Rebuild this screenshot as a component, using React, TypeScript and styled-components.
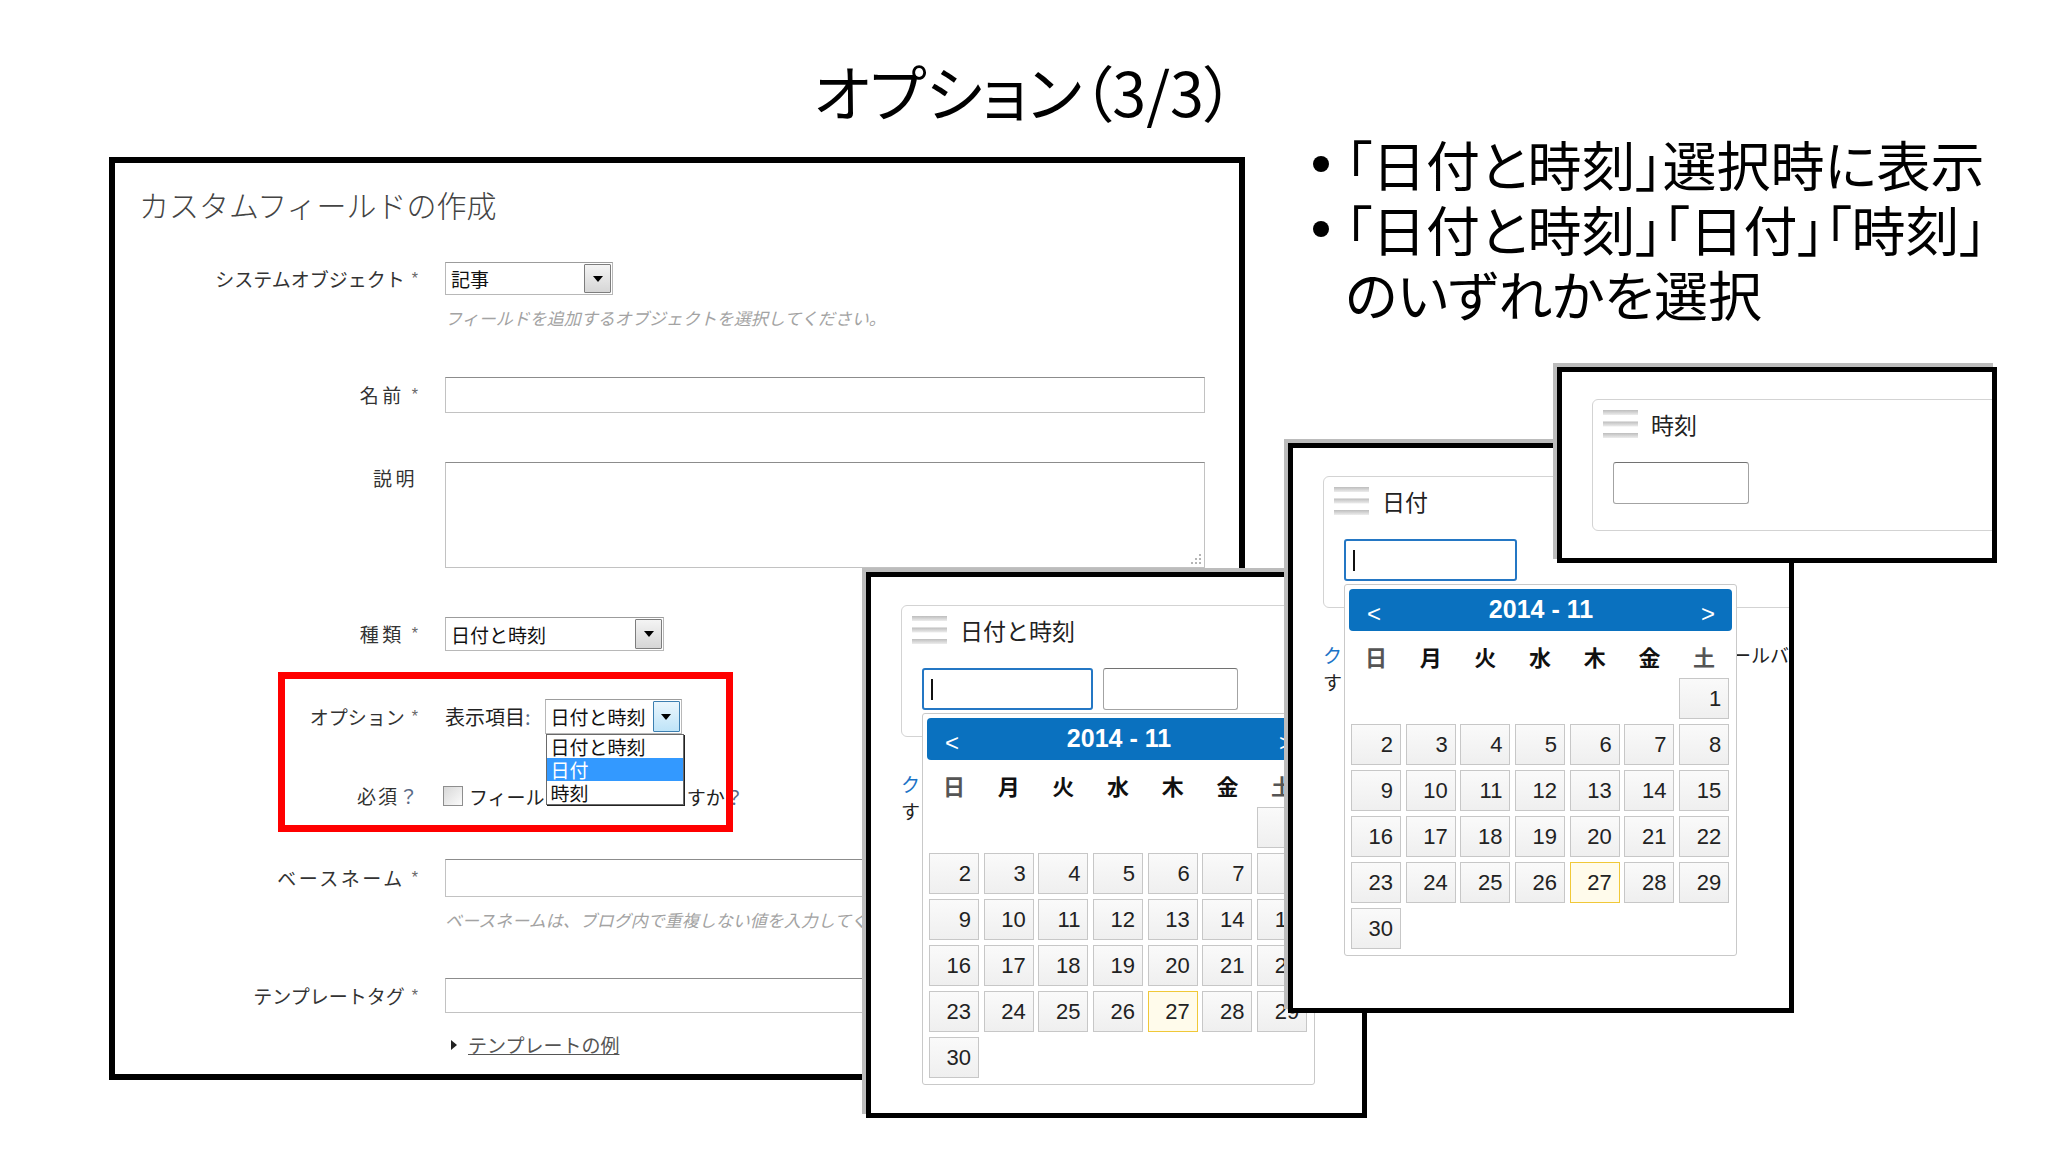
import React from 'react';
import styled, { createGlobalStyle } from 'styled-components';

const JP = `"Noto Sans CJK JP", "Noto Sans", sans-serif`;
const ARIAL = `"Liberation Sans", Arial, sans-serif`;

const GlobalStyle = createGlobalStyle`
  html, body {
    margin: 0;
    padding: 0;
    background: #fff;
  }
  body {
    width: 2048px;
    height: 1154px;
    overflow: hidden;
    font-family: ${JP};
    color: #000;
  }
  * {
    box-sizing: border-box;
  }
`;

const Slide = styled.div`
  position: relative;
  width: 2048px;
  height: 1154px;
  background: #fff;
`;

const Title = styled.h1`
  margin: 0;
  padding-top: 52px;
  text-align: center;
  font-size: 61px;
  font-weight: 400;
  line-height: 78px;
  font-feature-settings: 'palt';
`;

const Notes = styled.ul`
  position: absolute;
  left: 1305px;
  top: 131px;
  margin: 0;
  padding: 0;
  list-style: none;
  font-size: 54px;
  line-height: 65px;
  font-feature-settings: 'palt';
  white-space: nowrap;
`;

const Note = styled.li`
  display: flex;
  align-items: flex-start;
`;

const Dot = styled.span`
  flex: none;
  width: 16px;
  height: 16px;
  margin: 25px 16px 0 8px;
  border-radius: 50%;
  background: #000;
`;

/* a screenshot pasted on the slide */
const Shot = styled.div<{ $x: number; $y: number; $w: number; $h: number; $b?: number; $ghost?: boolean }>`
  position: absolute;
  isolation: isolate;
  left: ${p => p.$x}px;
  top: ${p => p.$y}px;
  width: ${p => p.$w}px;
  height: ${p => p.$h}px;
  border: ${p => p.$b ?? 5}px solid #000;
  background: #fff;
  overflow: hidden;
  box-shadow: ${p => (p.$ghost ? '-4px -4px 0 #bcbcbc' : 'none')};
`;

/* ---------- main form ---------- */

const Heading = styled.h2`
  margin: 0;
  padding: 21px 0 0 24px;
  font-size: 30px;
  line-height: 40px;
  font-weight: 300;
  color: #444;
  white-space: nowrap;
`;

const FormRow = styled.div<{ $mt: number }>`
  display: grid;
  grid-template-columns: 303px 760px;
  column-gap: 27px;
  align-items: start;
  margin-top: ${p => p.$mt}px;
`;

const Label = styled.div<{ $lh: number; $ls?: number }>`
  text-align: right;
  font-size: 19px;
  line-height: ${p => p.$lh}px;
  letter-spacing: ${p => p.$ls ?? 0}px;
  color: #333;
  white-space: nowrap;
`;

const Req = styled.span`
  margin-left: 7px;
  font-family: ${ARIAL};
  font-size: 16px;
  letter-spacing: 0;
  color: #666;
  vertical-align: 3px;
`;

const Quest = styled.span`
  color: #5a6a86;
  letter-spacing: 0;
`;

const TextField = styled.div<{ $h: number }>`
  position: relative;
  width: 760px;
  height: ${p => p.$h}px;
  border: 1px solid #c2c2c2;
  border-top-color: #8c8c8c;
  background: #fff;
`;

const Grip = styled.svg`
  position: absolute;
  right: 2px;
  bottom: 2px;
`;

const Help = styled.div<{ $mt: number }>`
  margin-top: ${p => p.$mt}px;
  font-size: 17px;
  line-height: 22px;
  font-style: italic;
  color: #a3a3a3;
  white-space: nowrap;
`;

const SelectBox = styled.div<{ $w: number; $h: number }>`
  position: relative;
  display: flex;
  align-items: stretch;
  width: ${p => p.$w}px;
  height: ${p => p.$h}px;
  border: 1px solid #b8b8b8;
  border-top-color: #9c9c9c;
  background: #fff;
  font-size: 19px;
  color: #111;
`;

const SelectText = styled.span`
  flex: 1;
  padding-left: 5px;
  display: flex;
  align-items: center;
  white-space: nowrap;
`;

const SelectButton = styled.span<{ $hot?: boolean }>`
  flex: none;
  width: 27px;
  margin: 1px;
  display: flex;
  align-items: center;
  justify-content: center;
  border: 1px solid ${p => (p.$hot ? '#3c7fb1' : '#7d7d7d')};
  border-radius: 1px;
  background: ${p =>
    p.$hot ? 'linear-gradient(#eaf6fd, #bfe4f8)' : 'linear-gradient(#f4f4f4, #d6d6d6)'};
  &::after {
    content: '';
    border-left: 5px solid transparent;
    border-right: 5px solid transparent;
    border-top: 6px solid #000;
  }
`;

const OptionList = styled.ul`
  position: absolute;
  left: 0;
  top: calc(100% + 1px);
  z-index: 1;
  width: 138px;
  margin: 0;
  padding: 0;
  list-style: none;
  background: #fff;
  border: 1px solid #6a6a6a;
  box-shadow: 1px 1px 0 #222;
  font-size: 19px;
  line-height: 23px;
`;

const OptionItem = styled.li<{ $selected?: boolean }>`
  padding-left: 4px;
  color: ${p => (p.$selected ? '#fff' : '#111')};
  background: ${p => (p.$selected ? '#3399ff' : 'transparent')};
`;

const Inline = styled.div<{ $h: number }>`
  display: flex;
  align-items: center;
  height: ${p => p.$h}px;
  font-size: 19px;
  color: #222;
  white-space: nowrap;
`;

const InlineLabel = styled.span`
  margin-right: 14px;
  font-size: 20px;
`;

const Check = styled.span`
  flex: none;
  width: 20px;
  height: 20px;
  margin: 0 6px 0 -2px;
  border: 1px solid #8e8e8e;
  background: linear-gradient(135deg, #d8d8d8, #fbfbfb);
`;

/* room for the part of the sentence hidden by the open list */
const Hidden = styled.span<{ $w: number }>`
  flex: none;
  width: ${p => p.$w}px;
`;

const TemplateLink = styled.div`
  display: flex;
  align-items: center;
  gap: 11px;
  margin-left: 6px;
  font-size: 19px;
  line-height: 22px;
  color: #555;
  white-space: nowrap;
  span {
    text-decoration: underline;
  }
`;

const Triangle = styled.i`
  width: 0;
  height: 0;
  border-left: 6px solid #222;
  border-top: 5px solid transparent;
  border-bottom: 5px solid transparent;
`;

const Annotation = styled.div`
  position: absolute;
  left: 163px;
  top: 509px;
  z-index: 2;
  width: 455px;
  height: 160px;
  border: 7px solid #ff0000;
  pointer-events: none;
`;

/* ---------- date / time pickers ---------- */

const Group = styled.div<{ $mt: number }>`
  width: 500px;
  height: 132px;
  margin: ${p => p.$mt}px 0 0 30px;
  border: 1px solid #d3d3d3;
  border-radius: 6px;
`;

const GroupHead = styled.div`
  display: flex;
  align-items: center;
  gap: 13px;
  height: 38px;
  padding: 10px 0 0 10px;
`;

const GroupLabel = styled.span`
  font-size: 23px;
  line-height: 28px;
  color: #222;
`;

const InputRow = styled.div`
  display: flex;
  gap: 10px;
  margin: 24px 0 0 20px;
`;

const InputWrap = styled.div`
  position: relative;
`;

const TextBox = styled.div<{ $w: number; $focus?: boolean }>`
  display: flex;
  align-items: center;
  width: ${p => p.$w}px;
  height: 42px;
  padding-left: 7px;
  border-radius: 3px;
  background: #fff;
  border: ${p => (p.$focus ? '2px solid #2477c4' : '1px solid #a3a3a3')};
  border-top-color: ${p => (p.$focus ? '#2477c4' : '#727272')};
`;

const Caret = styled.i`
  width: 2px;
  height: 21px;
  background: #111;
`;

const Behind = styled.div`
  margin: 33px 0 0 30px;
  font-size: 19px;
  line-height: 27px;
  color: #222;
  white-space: nowrap;
`;

const BehindLine = styled.div`
  display: flex;
  justify-content: space-between;
`;

const BlueLink = styled.span`
  color: #1a72c6;
`;

const CalendarPop = styled.div`
  position: absolute;
  left: 0;
  top: calc(100% + 3px);
  z-index: 3;
  width: 393px;
  height: 372px;
  padding: 4px 4px 6px;
  border: 1px solid #c9c9c9;
  border-radius: 3px;
  background: #fff;
`;

const CalHead = styled.div`
  display: flex;
  align-items: center;
  justify-content: space-between;
  height: 42px;
  padding: 3px 17px 0 18px;
  border-radius: 4px;
  background: #0a71bf;
  color: #fff;
  font-family: ${ARIAL};
`;

const Nav = styled.span`
  font-size: 24px;
  padding-top: 4px;
`;

const CalTitle = styled.span`
  font-size: 25px;
  font-weight: 700;
  margin-top: -4px;
`;

const Weekdays = styled.div`
  display: grid;
  grid-template-columns: repeat(7, 50px);
  column-gap: 4.7px;
  height: 47px;
  margin-left: 2px;
  padding-top: 10px;
  line-height: 30px;
  font-size: 22px;
  font-weight: 700;
  text-align: center;
`;

const Weekday = styled.span<{ $muted?: boolean }>`
  color: ${p => (p.$muted ? '#555' : '#111')};
`;

const DayGrid = styled.div`
  display: grid;
  grid-template-columns: repeat(7, 50px);
  grid-auto-rows: 41px;
  gap: 5px 4.7px;
  margin-left: 2px;
`;

const Day = styled.span<{ $today?: boolean; $start?: number }>`
  grid-column-start: ${p => p.$start ?? 'auto'};
  padding: 1px 7px 0 0;
  border: 1px solid ${p => (p.$today ? '#f0c838' : '#c7c7c7')};
  background: ${p => (p.$today ? '#fffbeb' : 'linear-gradient(#fafafa, #efefef)')};
  text-align: right;
  font-family: ${ARIAL};
  font-size: 22px;
  line-height: 38px;
  color: #222;
`;

const weekdays = ['日', '月', '火', '水', '木', '金', '土'];
const days = Array.from({ length: 30 }, (_, i) => i + 1);

const LinesIcon = () => (
  <svg width="35" height="28" viewBox="0 0 35 28">
    <defs>
      <linearGradient id="bar" x1="0" y1="0" x2="0" y2="1">
        <stop offset="0" stopColor="#bdbdbd" />
        <stop offset="1" stopColor="#ededed" />
      </linearGradient>
    </defs>
    <rect x="0" y="0" width="35" height="5" fill="url(#bar)" />
    <rect x="0" y="11.5" width="35" height="5" fill="url(#bar)" />
    <rect x="0" y="23" width="35" height="5" fill="url(#bar)" />
  </svg>
);

const Calendar = () => (
  <CalendarPop>
    <CalHead>
      <Nav>&lt;</Nav>
      <CalTitle>2014 - 11</CalTitle>
      <Nav>&gt;</Nav>
    </CalHead>
    <Weekdays>
      {weekdays.map((d, i) => (
        <Weekday key={d} $muted={i === 0 || i === 6}>
          {d}
        </Weekday>
      ))}
    </Weekdays>
    <DayGrid>
      {days.map(d => (
        <Day key={d} $today={d === 27} $start={d === 1 ? 7 : undefined}>
          {d}
        </Day>
      ))}
    </DayGrid>
  </CalendarPop>
);

type FieldSpec = { w: number; focus?: boolean };

const PickerShot = ({
  x,
  y,
  w,
  h,
  mt,
  label,
  fields,
  calendar,
  tail,
}: {
  x: number;
  y: number;
  w: number;
  h: number;
  mt: number;
  label: string;
  fields: FieldSpec[];
  calendar?: boolean;
  tail?: boolean;
}) => (
  <Shot $x={x} $y={y} $w={w} $h={h} $ghost>
    <Group $mt={mt}>
      <GroupHead>
        <LinesIcon />
        <GroupLabel>{label}</GroupLabel>
      </GroupHead>
      <InputRow>
        {fields.map((f, i) => (
          <InputWrap key={i}>
            <TextBox $w={f.w} $focus={f.focus}>
              {f.focus && <Caret />}
            </TextBox>
            {calendar && i === 0 && <Calendar />}
          </InputWrap>
        ))}
      </InputRow>
    </Group>
    {calendar && (
      <Behind>
        <BehindLine>
          <BlueLink>ク</BlueLink>
          {tail && <span>ールバ</span>}
        </BehindLine>
        <div>す</div>
      </Behind>
    )}
  </Shot>
);

const Select = ({ w, h, text, hot }: { w: number; h: number; text: string; hot?: boolean }) => (
  <SelectBox $w={w} $h={h}>
    <SelectText>{text}</SelectText>
    <SelectButton $hot={hot} />
  </SelectBox>
);

const App = () => (
  <>
    <GlobalStyle />
    <Slide>
      <Title>オプション（3/3）</Title>
      <Notes>
        <Note>
          <Dot />
          <span>「日付と時刻」選択時に表示</span>
        </Note>
        <Note>
          <Dot />
          <span>
            「日付と時刻」「日付」「時刻」
            <br />
            のいずれかを選択
          </span>
        </Note>
      </Notes>

      <Shot $x={109} $y={157} $w={1136} $h={923} $b={6}>
        <Heading>カスタムフィールドの作成</Heading>

        <FormRow $mt={38}>
          <Label $lh={33}>
            システムオブジェクト<Req>*</Req>
          </Label>
          <div>
            <Select w={168} h={33} text="記事" />
            <Help $mt={12}>フィールドを追加するオブジェクトを選択してください。</Help>
          </div>
        </FormRow>

        <FormRow $mt={48}>
          <Label $lh={36} $ls={3.5}>
            名前<Req>*</Req>
          </Label>
          <TextField $h={36} />
        </FormRow>

        <FormRow $mt={49}>
          <Label $lh={32} $ls={3.5}>
            説明
          </Label>
          <TextField $h={106}>
            <Grip width="14" height="12" viewBox="0 0 14 12">
              <g fill="#b5b5b5">
                <rect x="11" y="1" width="2" height="2" />
                <rect x="7" y="5" width="2" height="2" />
                <rect x="11" y="5" width="2" height="2" />
                <rect x="3" y="9" width="2" height="2" />
                <rect x="7" y="9" width="2" height="2" />
                <rect x="11" y="9" width="2" height="2" />
              </g>
            </Grip>
          </TextField>
        </FormRow>

        <FormRow $mt={49}>
          <Label $lh={34} $ls={3.5}>
            種類<Req>*</Req>
          </Label>
          <Select w={219} h={34} text="日付と時刻" />
        </FormRow>

        <FormRow $mt={48}>
          <Label $lh={35}>
            オプション<Req>*</Req>
          </Label>
          <Inline $h={35}>
            <InlineLabel>
              表示項目<Quest>:</Quest>
            </InlineLabel>
            <SelectBox $w={137} $h={35}>
              <SelectText>日付と時刻</SelectText>
              <SelectButton $hot />
              <OptionList>
                <OptionItem>日付と時刻</OptionItem>
                <OptionItem $selected>日付</OptionItem>
                <OptionItem>時刻</OptionItem>
              </OptionList>
            </SelectBox>
          </Inline>
        </FormRow>

        <FormRow $mt={52}>
          <Label $lh={20} $ls={2}>
            必須<Quest>？</Quest>
          </Label>
          <Inline $h={20}>
            <Check />
            <span>フィール</span>
            <Hidden $w={142} />
            <span>
              すか<Quest>？</Quest>
            </span>
          </Inline>
        </FormRow>

        <FormRow $mt={53}>
          <Label $lh={38} $ls={2.5}>
            ベースネーム<Req>*</Req>
          </Label>
          <div>
            <TextField $h={38} />
            <Help $mt={12}>ベースネームは、ブログ内で重複しない値を入力してください。</Help>
          </div>
        </FormRow>

        <FormRow $mt={47}>
          <Label $lh={35}>
            テンプレートタグ<Req>*</Req>
          </Label>
          <TextField $h={35} />
        </FormRow>

        <FormRow $mt={21}>
          <span />
          <TemplateLink>
            <Triangle />
            <span>テンプレートの例</span>
          </TemplateLink>
        </FormRow>

        <Annotation />
      </Shot>

      <PickerShot
        x={866}
        y={572}
        w={501}
        h={546}
        mt={28}
        label="日付と時刻"
        fields={[{ w: 171, focus: true }, { w: 135 }]}
        calendar
      />
      <PickerShot
        x={1288}
        y={443}
        w={506}
        h={570}
        mt={28}
        label="日付"
        fields={[{ w: 173, focus: true }]}
        calendar
        tail
      />
      <PickerShot x={1557} y={367} w={440} h={196} mt={27} label="時刻" fields={[{ w: 136 }]} />
    </Slide>
  </>
);

export default App;
